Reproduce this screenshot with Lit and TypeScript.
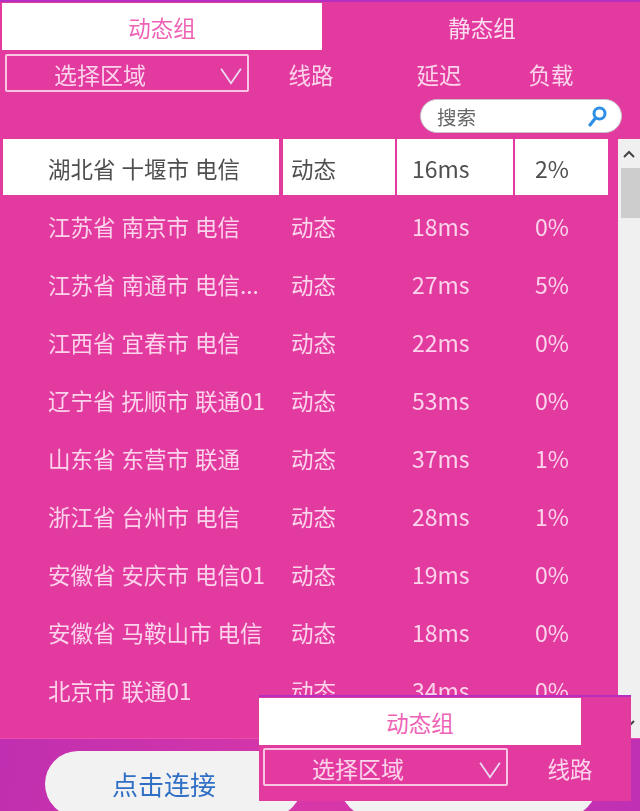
import { LitElement, html, css } from "lit";
import { customElement } from "lit/decorators.js";

const ROWS: [string, string, string, string][] = [
  ["湖北省 十堰市 电信", "动态", "16ms", "2%"],
  ["江苏省 南京市 电信", "动态", "18ms", "0%"],
  ["江苏省 南通市 电信...", "动态", "27ms", "5%"],
  ["江西省 宜春市 电信", "动态", "22ms", "0%"],
  ["辽宁省 抚顺市 联通01", "动态", "53ms", "0%"],
  ["山东省 东营市 联通", "动态", "37ms", "1%"],
  ["浙江省 台州市 电信", "动态", "28ms", "1%"],
  ["安徽省 安庆市 电信01", "动态", "19ms", "0%"],
  ["安徽省 马鞍山市 电信", "动态", "18ms", "0%"],
  ["北京市 联通01", "动态", "34ms", "0%"],
];

const chevron = html`<svg class="chev" viewBox="0 0 26 20" width="26" height="20"><path d="M2 2 L13 18 L24 2" fill="none" stroke="#e9dcf2" stroke-width="2"/></svg>`;

@customElement("app-root")
export class AppRoot extends LitElement {
  static styles = css`
    :host { display: block; width: 640px; height: 811px; position: relative; overflow: hidden; font-family: "Noto Sans CJK SC", "Liberation Sans", sans-serif; font-size: 22.5px; color: #fbd3ea; }
    .page { width: 640px; height: 811px; display: flex; flex-direction: column; background: #e33aa0; border-top: 2px solid #b52fc0; box-sizing: border-box; filter: blur(0.6px); }
    .tabs { display: flex; height: 48px; padding: 1px 0 0 2px; flex: none; box-sizing: border-box; }
    .tab { width: 320px; display: flex; align-items: center; justify-content: center; font-size: 22.5px; color: #fbdcef; }
    .tab.on { background: #fff; color: #ee63b6; }
    .tab.off { flex: 1; padding-left: 2px; }
    .filter { display: grid; grid-template-columns: 244px 124px 132px 92px; align-items: center; height: 38px; margin: 4px 0 0 5px; flex: none; }
    .select { box-sizing: border-box; height: 38px; border: 2px solid #f8c4e2; border-radius: 2px; display: flex; align-items: center; justify-content: space-between; padding: 2px 4px 0 47px; line-height: 1; font-size: 23px; }
    .chev { width: 24px; height: 18px; margin-top: 3px; }
    .head { text-align: center; padding-top: 2px; font-size: 22.5px; }
    .searchrow { display: flex; justify-content: flex-end; padding: 7px 18px 0 0; height: 47px; box-sizing: border-box; flex: none; }
    .search { width: 202px; height: 34px; background: #fff; border-radius: 17px; border: 1px solid #c9c2c6; box-sizing: border-box; display: flex; align-items: center; justify-content: space-between; padding: 0 14px 0 16px; font-size: 19.5px; color: #666; }
    .main { flex: 1; display: flex; min-height: 0; }
    .list { flex: none; width: 618px; padding-left: 3px; box-sizing: border-box; overflow: hidden; }
    .row { display: flex; height: 58px; align-items: stretch; gap: 2px; width: 605px; word-spacing: 1px; }
    .row > div { height: 56px; display: flex; align-items: center; box-sizing: border-box; padding-top: 2px; }
    .c1 { width: 276px; padding-left: 45px; margin-right: 2px; white-space: pre; }
    .c2 { width: 112px; padding-left: 8px; }
    .c3 { width: 116px; padding-left: 15px; font-size: 23px; }
    .c4 { width: 93px; padding-left: 20px; font-size: 23px; }
    .row.on > div { background: #fff; color: #4f4f4f; }
    .bar { flex: none; width: 22px; background: #f0f0f0; display: flex; flex-direction: column; align-items: center; }
    .arrow { height: 29px; width: 100%; display: flex; align-items: center; justify-content: center; flex: none; }
    .thumb { width: 19px; height: 50px; background: #cdcdcd; margin-left: 3px; flex: none; }
    .sp { flex: 1; }
    .foot { flex: none; height: 73px; border-top: 1px solid #ee4ab0; box-sizing: border-box; background: linear-gradient(100deg, #c02fb0, #d837a8 50%, #bf30b4); display: flex; gap: 38px; padding: 12px 0 0 45px; overflow: hidden; }
    .btn { width: 257px; height: 66px; background: #f2f2f2; border-radius: 33px; flex: none; display: flex; align-items: center; justify-content: center; padding: 0 19px 0 0; box-sizing: border-box; color: #2f6fc6; font-size: 26px; line-height: 1; }
    .float { position: absolute; left: 259px; top: 695px; width: 372px; height: 106px; background: #e33aa0; border-top: 2px solid #b52fc0; box-sizing: border-box; filter: blur(0.6px); }
    .float .tabs { padding: 1px 0 0 0; height: 48px; }
    .float .tab.on { width: 322px; }
    .float .filter { grid-template-columns: 245px 124px; margin: 3px 0 0 4px; }
    .mag { flex: none; }
  `;

  render() {
    return html`
      <div class="page">
        <div class="tabs"><div class="tab on">动态组</div><div class="tab off">静态组</div></div>
        <div class="filter">
          <div class="select"><span>选择区域</span>${chevron}</div>
          <div class="head">线路</div><div class="head">延迟</div><div class="head">负载</div>
        </div>
        <div class="searchrow">
          <div class="search"><span>搜索</span>
            <svg class="mag" width="19" height="21" viewBox="0 0 19 21"><circle cx="11.5" cy="7.5" r="5.5" fill="none" stroke="#2f8fe6" stroke-width="3"/><path d="M7.5 12 L2 19" stroke="#2f8fe6" stroke-width="3.2" stroke-linecap="round"/></svg>
          </div>
        </div>
        <div class="main">
          <div class="list">
            ${ROWS.map((r, i) => html`<div class="row ${i === 0 ? "on" : ""}">
              <div class="c1">${r[0]}</div><div class="c2">${r[1]}</div><div class="c3">${r[2]}</div><div class="c4">${r[3]}</div>
            </div>`)}
          </div>
          <div class="bar">
            <div class="arrow"><svg width="12" height="8" viewBox="0 0 12 8"><path d="M1 7 L6 2 L11 7" fill="none" stroke="#444" stroke-width="2"/></svg></div>
            <div class="thumb"></div>
            <div class="sp"></div>
            <div class="arrow"><svg width="12" height="8" viewBox="0 0 12 8"><path d="M1 1 L6 6 L11 1" fill="none" stroke="#444" stroke-width="2"/></svg></div>
          </div>
        </div>
        <div class="foot"><div class="btn">点击连接</div><div class="btn"></div></div>
      </div>
      <div class="float">
        <div class="tabs"><div class="tab on">动态组</div></div>
        <div class="filter">
          <div class="select"><span>选择区域</span>${chevron}</div>
          <div class="head">线路</div>
        </div>
      </div>
    `;
  }
}
